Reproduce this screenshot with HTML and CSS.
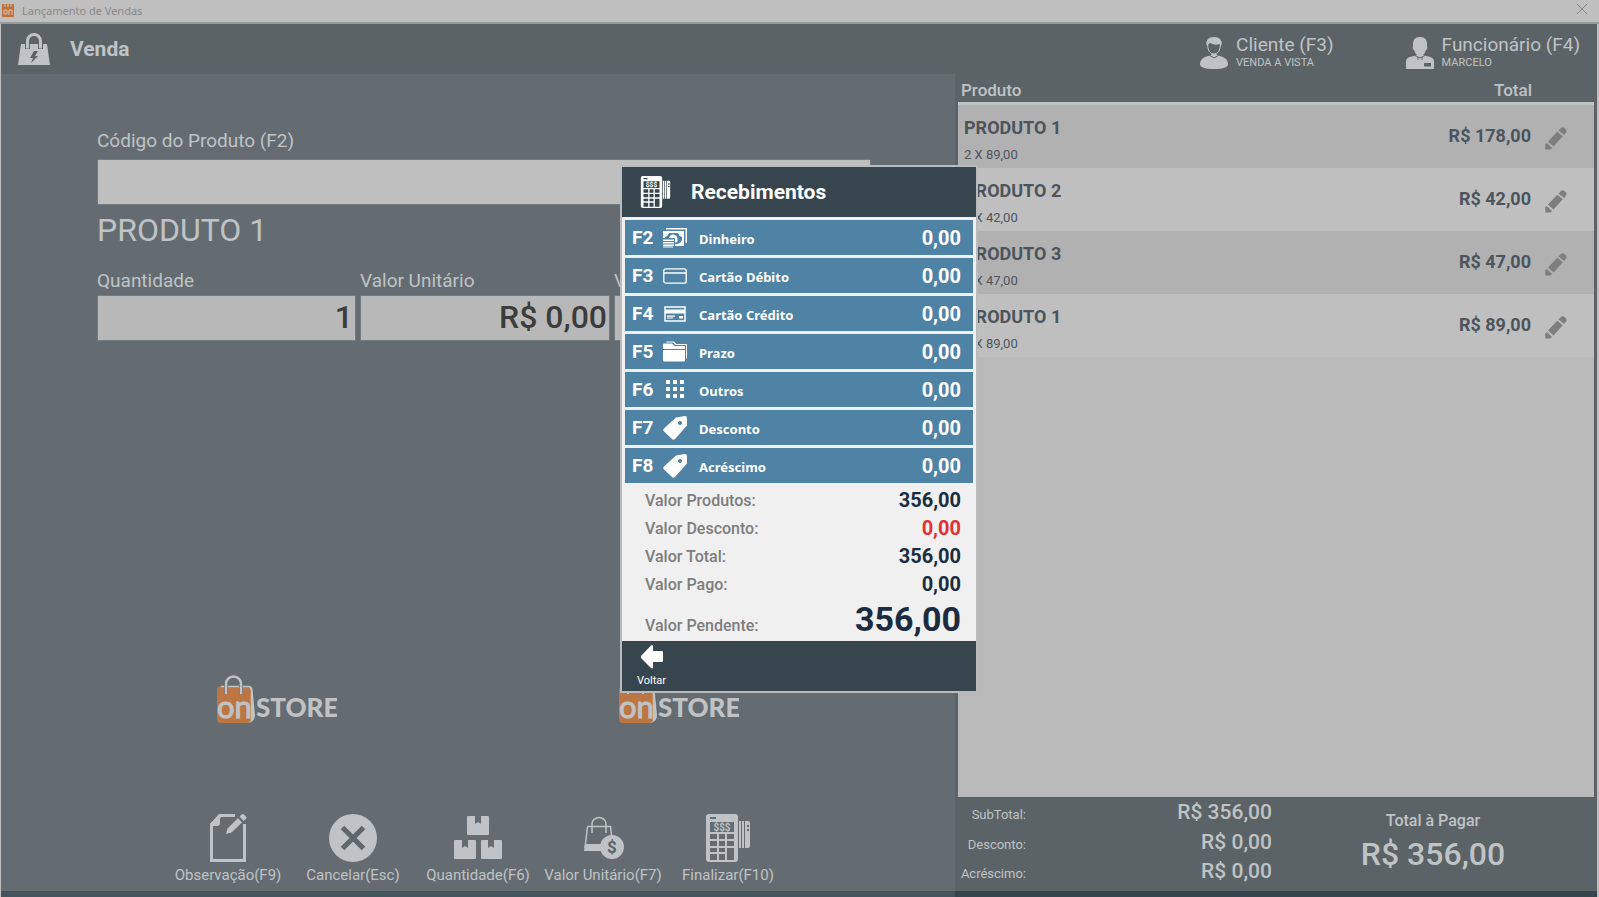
FILE: index.html
```html
<!DOCTYPE html>
<html lang="pt-BR">
<head>
<meta charset="utf-8">
<title>Lançamento de Vendas</title>
<link rel="stylesheet" href="styles.css">
</head>
<body>
<svg class="sprite" aria-hidden="true">
  <symbol id="i-card-machine" viewBox="0 0 44 48">
    <path fill="currentColor" fill-rule="evenodd" d="M3 0H29a3 3 0 0 1 3 3V45a3 3 0 0 1-3 3H3a3 3 0 0 1-3-3V3a3 3 0 0 1 3-3ZM4 8V18H28V8ZM4 20V25H11V20ZM13 20V25H19V20ZM21 20V25H28V20ZM4 27V32H11V27ZM13 27V32H19V27ZM21 27V32H28V27ZM4 34V38H11V34ZM13 34V38H19V34ZM21 34V46H28V34ZM4 40V46H11V40ZM13 40V46H19V40ZM4 3V5H10V3Z"/>
    <path fill="currentColor" fill-rule="evenodd" d="M33 7H35V34H33ZM36 7H38V34H36ZM39 7H42a2 2 0 0 1 2 2V32a2 2 0 0 1-2 2H39ZM41 11V13H43V11ZM41 15V17H43V15Z"/>
    <text x="16" y="16.500" class="machine-text" text-anchor="middle">$$$</text>
  </symbol>
  <symbol id="i-pencil" viewBox="0 0 22 23">
    <path fill="currentColor" d="M13.500 3.500 16 1Q17.500-.2 19.200.8L21 2.600Q22 4 21 5.600L19 8ZM12.300 4.800 17.800 9.300 8.500 19.600 3 14.500ZM1.800 16 7 21 5.500 22.500H.3V17.500Z"/>
  </symbol>
  <symbol id="i-tag" viewBox="0 0 24 24">
    <path fill="currentColor" fill-rule="evenodd" d="M13 1.500 22 0q2 0 2 2V9.500L12 23q-1.500 1.500-3 0L1 15.500q-1.500-1.500 0-3ZM17 5a2 2 0 1 0 .01 0Z"/>
  </symbol>
  <symbol id="i-logo" viewBox="0 0 120 48">
    <path fill="#c0c2c4" d="M31 11q4 0 4.500 3L38 40q0 6-6 8H29Z"/>
    <rect y="11" width="34" height="37" rx="4" fill="#bc7643"/>
    <path d="M4 11.500H32Q34.500 12 34.500 17V46" fill="none" stroke="#c0c2c4" stroke-width="1.500"/>
    <path d="M9 19V9a7.500 7.500 0 0 1 15 0V19" fill="none" stroke="#646c71" stroke-width="4"/>
    <path d="M9 19V9a7.500 7.500 0 0 1 15 0V19" fill="none" stroke="#c0c2c4" stroke-width="2.500"/>
    <text x="0" y="43" class="logo-on">on</text>
    <text x="39" y="42" class="logo-store">STORE</text>
  </symbol>
</svg>

<div class="window">
  <header class="titlebar">
    <svg class="titlebar-icon" viewBox="0 0 12 13"><rect width="12" height="13" rx="1" fill="#bf7038"/><path d="M3 0V3M6 0V3M9 0V3M2 6H5V10H2ZM7 11V6H10V11" fill="none" stroke="#d8c6b8"/></svg>
    <span>Lançamento de Vendas</span>
    <button class="close" type="button" aria-label="Fechar"><svg viewBox="0 0 10 10"><path d="M0 0 10 10M10 0 0 10" stroke="currentColor"/></svg></button>
  </header>

  <div class="app">
    <div class="topbar">
      <svg class="bag" viewBox="0 0 32 32"><path fill="currentColor" fill-rule="evenodd" d="M3 11H29L32 32H0ZM16 18 12 25H15L13 30 20 23H17L20 18Z"/><path d="M9.500 16V8a6.500 6.500 0 0 1 13 0V16" fill="none" stroke="#5b6367" stroke-width="5"/><path d="M9.500 15.500V8a6.500 6.500 0 0 1 13 0V15.500" fill="none" stroke="currentColor" stroke-width="3"/></svg>
      <h1>Venda</h1>
      <button class="person" type="button">
        <svg viewBox="0 0 28 32"><path fill="currentColor" d="M0 27q0-6 8-8 3-.5 4-2h4q1 1.500 4 2 8 2 8 8 0 5-14 5T0 27Z"/><path d="M7.500 6q0 11 6.500 11T20.500 6Q20 1 14 1T7.500 6Z" fill="#5b6367" stroke="currentColor" stroke-width="1"/><path fill="currentColor" d="M6.500 8Q5.500 0 14 0t7.500 8l-1 1-1-2q-5 2-9-1-2 0-3 3Z"/><path d="M9 18 14 21 19 18" fill="none" stroke="#5b6367"/></svg>
        <span><b>Cliente (F3)</b><small>VENDA A VISTA</small></span>
      </button>
      <button class="person employee" type="button">
        <svg viewBox="0 0 28 32"><path fill="currentColor" fill-rule="evenodd" d="M0 32V24q0-4 8-5l3-1h6l3 1q8 1 8 5v8ZM18 26V29.500H25V26Z"/><path fill="currentColor" d="M7 9Q6 0 14 0t7 9q1 3-1 4-2 6-6 6t-6-6Q6 12 7 9Z"/><path d="M9 18.500 14 21 19 18.500M12 20V23M16 20V23" fill="none" stroke="#5b6367"/></svg>
        <span><b>Funcionário (F4)</b><small>MARCELO</small></span>
      </button>
    </div>

    <div class="panes">
      <main class="sale">
        <form class="form">
          <label for="codigo">Código do Produto (F2)</label>
          <input id="codigo" type="text">
          <h2>PRODUTO 1</h2>
          <div class="fields">
            <div><label for="qtd">Quantidade</label><input id="qtd" type="text" value="1"></div>
            <div><label for="unit">Valor Unitário</label><input id="unit" type="text" value="R$ 0,00"></div>
            <div><label for="tot">Valor Total</label><input id="tot" type="text"></div>
          </div>
        </form>
        <div class="logos">
          <svg role="img" aria-label="onStore"><use href="#i-logo"/></svg>
          <svg role="img" aria-label="onStore"><use href="#i-logo"/></svg>
        </div>
        <nav class="actions">
          <button type="button"><svg viewBox="0 0 48 48"><path d="M31 1.500H17L7.500 10.500V46.500H40.500V10" fill="none" stroke="currentColor" stroke-width="3"/><path d="M23 18 42 0" stroke="#646c71" stroke-width="10"/><path fill="currentColor" d="M16 0V9q0 3-3 3H6V10L15 0ZM34 4 38 8.500 27.500 18.500 22 20 23.500 14.500ZM35.500 2.500 37.500.5Q39-.5 40.500 1L42 2.500Q43 4 42 5L39.500 7Z"/></svg>Observação(F9)</button>
          <button type="button"><svg viewBox="0 0 48 48"><circle cx="24" cy="24" r="24" fill="currentColor"/><path d="M13.500 13.500 34.500 34.500M34.500 13.500 13.500 34.500" stroke="#5f676c" stroke-width="5"/></svg>Cancelar(Esc)</button>
          <button type="button"><svg viewBox="0 0 48 48"><path fill="currentColor" d="M14 2H21V10L24 8 27 10V2H34q1 0 1 1V20q0 1-1 1H14q-1 0-1-1V3q0-1 1-1ZM1 26H8V34L11 32 14 34V26H21q1 0 1 1V44q0 1-1 1H1q-1 0-1-1V27q0-1 1-1ZM28 26H34V34L37 32 40 34V26H47q1 0 1 1V44q0 1-1 1H28q-1 0-1-1V27q0-1 1-1Z"/></svg>Quantidade(F6)</button>
          <button type="button"><svg viewBox="0 0 48 48"><path d="M13 19V10a7 6.500 0 0 1 14 0V19M8.500 12.500H31.500L33 26M8.500 12.500 6 34" fill="none" stroke="currentColor" stroke-width="1.500"/><path fill="currentColor" d="M6 30H23V37H5Z"/><circle cx="33" cy="33" r="12" fill="currentColor"/><text x="33" y="39" class="coin-text" text-anchor="middle">$</text></svg>Valor Unitário(F7)</button>
          <button type="button"><svg><use href="#i-card-machine"/></svg>Finalizar(F10)</button>
        </nav>
      </main>

      <aside class="cart">
        <div class="list">
          <table>
            <thead><tr><th scope="col">Produto</th><th scope="col" class="num">Total</th><th class="edit"></th></tr></thead>
            <tbody>
              <tr><td><strong>PRODUTO 1</strong><span>2 X 89,00</span></td><td class="num">R$ 178,00</td><td class="edit"><button type="button" aria-label="Editar"><svg><use href="#i-pencil"/></svg></button></td></tr>
              <tr><td><strong>PRODUTO 2</strong><span>1 X 42,00</span></td><td class="num">R$ 42,00</td><td class="edit"><button type="button" aria-label="Editar"><svg><use href="#i-pencil"/></svg></button></td></tr>
              <tr><td><strong>PRODUTO 3</strong><span>1 X 47,00</span></td><td class="num">R$ 47,00</td><td class="edit"><button type="button" aria-label="Editar"><svg><use href="#i-pencil"/></svg></button></td></tr>
              <tr><td><strong>PRODUTO 1</strong><span>1 X 89,00</span></td><td class="num">R$ 89,00</td><td class="edit"><button type="button" aria-label="Editar"><svg><use href="#i-pencil"/></svg></button></td></tr>
            </tbody>
          </table>
        </div>
        <div class="summary">
          <dl>
            <dt>SubTotal:</dt><dd>R$ 356,00</dd>
            <dt>Desconto:</dt><dd>R$ 0,00</dd>
            <dt>Acréscimo:</dt><dd>R$ 0,00</dd>
          </dl>
          <div class="due"><span>Total à Pagar</span><strong>R$ 356,00</strong></div>
        </div>
      </aside>
    </div>
  </div>
</div>

<div class="overlay">
  <section class="modal" role="dialog" aria-labelledby="modal-title">
    <header>
      <svg><use href="#i-card-machine"/></svg>
      <h2 id="modal-title">Recebimentos</h2>
    </header>
    <div class="methods">
      <button type="button"><kbd>F2</kbd><svg viewBox="0 0 24 24"><path fill="currentColor" fill-rule="evenodd" d="M3 2H24V17H22.500V3.500H3ZM0 5H21V20H12V18H14Q18 17 19 14V11Q16 10 15 7H6Q5 10 2 11V12H0Z"/><path fill="currentColor" d="M6 12Q7 8 10.500 8.500T14.500 13 12 16.500V12ZM0 13.500H11V15H0ZM0 16H11V17.500H0ZM0 18.500H11V20H0ZM0 20.500H10V21.500H0Z"/></svg><span>Dinheiro</span><b>0,00</b></button>
      <button type="button"><kbd>F3</kbd><svg viewBox="0 0 24 24"><rect x=".8" y="4.800" width="22.400" height="14.400" rx="2" fill="none" stroke="currentColor" stroke-width="1.300"/><path d="M1 9H23" stroke="currentColor" stroke-width="1.500"/></svg><span>Cartão Débito</span><b>0,00</b></button>
      <button type="button"><kbd>F4</kbd><svg viewBox="0 0 24 24"><rect x="2" y="5" width="20" height="14" fill="none" stroke="currentColor" stroke-width="1.500"/><path fill="currentColor" d="M2 7.500H22V11.500H2ZM4 13.500H12V14.700H4ZM4 15.500H10V16.500H4ZM16 14H20V16.500H16Z"/></svg><span>Cartão Crédito</span><b>0,00</b></button>
      <button type="button"><kbd>F5</kbd><svg viewBox="0 0 24 24"><path fill="currentColor" d="M0 10H22V20.500q0 1-1 1H1q-1 0-1-1ZM0 9V4.500q0-1 1-1H9L11.500 6H21q1 0 1 1V9ZM3 2.500 4 1.500H11L13.500 4H23q1 0 1 1V18.500H23V6q0-1-1-1H12.500L10 2.500Z"/></svg><span>Prazo</span><b>0,00</b></button>
      <button type="button"><kbd>F6</kbd><svg viewBox="0 0 24 24"><path fill="currentColor" d="M3 2h4v4h-4ZM10 2h4v4h-4ZM17 2h4v4h-4ZM3 9h4v4h-4ZM10 9h4v4h-4ZM17 9h4v4h-4ZM3 16h4v4h-4ZM10 16h4v4h-4ZM17 16h4v4h-4Z"/></svg><span>Outros</span><b>0,00</b></button>
      <button type="button"><kbd>F7</kbd><svg><use href="#i-tag"/></svg><span>Desconto</span><b>0,00</b></button>
      <button type="button"><kbd>F8</kbd><svg><use href="#i-tag"/></svg><span>Acréscimo</span><b>0,00</b></button>
    </div>
    <dl class="totals">
      <div><dt>Valor Produtos:</dt><dd>356,00</dd></div>
      <div><dt>Valor Desconto:</dt><dd class="discount">0,00</dd></div>
      <div><dt>Valor Total:</dt><dd>356,00</dd></div>
      <div><dt>Valor Pago:</dt><dd>0,00</dd></div>
      <div class="pending"><dt>Valor Pendente:</dt><dd>356,00</dd></div>
    </dl>
    <footer>
      <button type="button"><svg viewBox="0 0 22 24"><path fill="currentColor" d="M0 11 10 .5Q12-.5 12 1V6H21q1 0 1 1V16q0 1-1 1H12V22.500Q12 24 10 23L0 13Q-.5 12 0 11Z"/></svg>Voltar</button>
    </footer>
  </section>
</div>
</body>
</html>
```
FILE: styles.css
```css
* { box-sizing: border-box; }

body {
  margin: 0;
  background: #bfbfbf;
  color: #c0c3c5;
  font-family: Roboto, "Liberation Sans", sans-serif;
  font-size: 16px;
}

h1, h2, dl, dd { margin: 0; }

button {
  padding: 0;
  border: 0;
  background: none;
  color: inherit;
  font: inherit;
}

svg { display: block; flex: none; }

.sprite { display: none; }

.window {
  display: flex;
  flex-direction: column;
  min-height: 100vh;
}

.titlebar {
  display: flex;
  align-items: center;
  gap: 8px;
  height: 24px;
  padding: 0 10px 2px 2px;
  border-bottom: 2px solid #989b9e;
  background: #bfbfbf;
  color: #888;
  font-family: "Noto Sans", sans-serif;
  font-size: 11px;
}

.titlebar-icon { width: 12px; height: 13px; }
.close { margin-left: auto; padding: 0 2px 2px; }
.close svg { width: 10px; height: 10px; }

.app {
  display: flex;
  flex: 1;
  flex-direction: column;
  margin: 0 2px 0 1px;
}

.topbar {
  display: flex;
  align-items: center;
  height: 50px;
  padding: 0 17px;
  background: #5b6367;
}

.bag { width: 32px; height: 32px; }

.topbar h1 {
  margin: 0 auto 0 20px;
  font-size: 21px;
  font-weight: 700;
}

.person {
  display: flex;
  align-items: center;
  gap: 8px;
  padding-top: 8px;
  text-align: left;
}

.person svg { width: 28px; height: 32px; }
.employee { margin-left: 72px; }
.person b { display: block; font-size: 19px; font-weight: 400; line-height: 20px; }
.person small { display: block; font-size: 11px; line-height: 16px; }

.panes {
  display: grid;
  flex: 1;
  grid-template-columns: minmax(0, 954fr) minmax(0, 642fr);
}

.sale {
  display: flex;
  flex-direction: column;
  border-bottom: 6px solid #43565e;
  background: #646c71;
}

.form { padding: 55px 84px 0 96px; }

.form label {
  display: block;
  margin-bottom: 2px;
  font-size: 19px;
  line-height: 24px;
}

.form > label { margin-bottom: 6px; }

.form input {
  display: block;
  width: 100%;
  height: 46px;
  padding: 0 2px 2px;
  border: 1px solid #747b7f;
  border-radius: 0;
  background: #b8b8b8;
  color: #3c3c3c;
  font: 500 32px Roboto, sans-serif;
  text-align: right;
}

.form > input { background: #bfbfbf; text-align: left; }

.form h2 {
  margin: 5px 0 19px;
  font-size: 32px;
  font-weight: 400;
  line-height: 40px;
}

.fields {
  display: grid;
  grid-template-columns: 259fr 250fr 257fr;
  gap: 4px;
}

.logos {
  display: grid;
  grid-template-columns: 402px 402px;
  justify-content: center;
  justify-items: center;
  margin: auto 0 91px;
}

.logos svg { width: 120px; height: 48px; overflow: visible; }
.logo-on { fill: #c0c2c4; stroke: #c0c2c4; font: 400 31px Lato, sans-serif; }
.logo-store { fill: #c0c2c4; font: 900 26px Lato, sans-serif; }

.actions {
  display: grid;
  grid-template-columns: repeat(5, 125px);
  justify-content: center;
  padding-bottom: 7px;
}

.actions button {
  display: flex;
  flex-direction: column;
  align-items: center;
  gap: 4px;
  font-size: 15px;
  line-height: 18px;
  white-space: nowrap;
}

.actions svg { width: 48px; height: 48px; }
.coin-text { fill: #5b6367; font: 700 17px Roboto, sans-serif; }
.machine-text { fill: currentColor; font: 700 10px Roboto, sans-serif; }

.cart {
  display: flex;
  flex-direction: column;
  padding: 0 3px;
  border-bottom: 6px solid #35454e;
  background: #5b6367;
}

.list { flex: 1; background: #b9b9b9; }
.list table { width: 100%; border-spacing: 0; }

.list th {
  height: 31px;
  padding: 3px 3px 0;
  border-bottom: 3px solid #bdc2c4;
  background: #5b6367;
  font-size: 17px;
  font-weight: 500;
  line-height: 20px;
  text-align: left;
}

.list td { height: 63px; padding: 8px 6px 0; background: #bfbfbf; color: #4c545c; }
.list tr:nth-child(odd) td { background: #b1b1b1; }
.list strong { display: block; font-size: 18px; line-height: 24px; }
.list td span { display: block; padding-top: 5px; font-size: 13px; line-height: 20px; }
.list .num { padding: 3px 0 0; text-align: right; }
.list td.num { padding: 0 1px 2px 0; font-size: 18px; font-weight: 700; }
.list .edit { width: 62px; padding: 3px 0 0 13px; }
.list .edit button { display: block; color: #7e7e7e; }
.list .edit svg { width: 22px; height: 23px; }

.summary { display: flex; height: 94px; }

.summary dl {
  display: grid;
  flex: 313;
  grid-template-columns: 68px 1fr;
  grid-template-rows: 30px 30px 28px;
  align-items: center;
}

.summary dt { padding-top: 4px; font-size: 13px; text-align: right; white-space: nowrap; }
.summary dd { font-size: 21px; font-weight: 500; text-align: right; }

.due {
  display: flex;
  flex: 321;
  flex-direction: column;
  align-items: center;
  padding-top: 14px;
}

.due span { font-size: 16px; font-weight: 500; line-height: 20px; }
.due strong { font-size: 32px; font-weight: 500; line-height: 46px; }

.overlay {
  position: fixed;
  inset: 0 1px 0 0;
  display: flex;
  align-items: flex-start;
  justify-content: center;
  padding-top: 165px;
}

.modal {
  width: 358px;
  border: 2px solid #b9bbbd;
  background: #f0f0f0;
  color: #fff;
}

.modal header {
  display: flex;
  align-items: center;
  gap: 20px;
  height: 50px;
  padding-left: 18px;
  background: #37464e;
}

.modal header svg { width: 31px; height: 32px; }
.modal header h2 { font-size: 21px; font-weight: 700; }

.methods {
  display: grid;
  gap: 3px;
  padding: 3px 3px 0;
}

.methods button {
  display: flex;
  align-items: center;
  height: 35px;
  padding: 0 12px 0 7px;
  background: #4f83a5;
  text-align: left;
}

.methods kbd { width: 31px; font: 700 19px Roboto, sans-serif; }
.methods svg { width: 24px; height: 24px; }
.methods span { flex: 1; padding: 3px 0 0 12px; font: 700 13px "Noto Sans", sans-serif; }
.methods b { font-size: 20px; }

.totals { padding: 3px 15px 0 23px; }

.totals div {
  display: flex;
  align-items: center;
  justify-content: space-between;
  height: 28px;
}

.totals dt { color: #7d7d7d; font-size: 16px; font-weight: 500; }
.totals dd { color: #1b2c40; font-size: 20px; font-weight: 700; }
.totals .discount { color: #e23036; }
.totals .pending { height: 43px; padding-bottom: 2px; }
.totals .pending dt { padding-top: 13px; }
.totals .pending dd { font-size: 34px; }

.modal footer { height: 50px; padding: 4px 15px; background: #37464e; }

.modal footer button {
  display: flex;
  flex-direction: column;
  align-items: center;
  gap: 4px;
  font-size: 11px;
  line-height: 16px;
}

.modal footer svg { width: 22px; height: 24px; }
```
